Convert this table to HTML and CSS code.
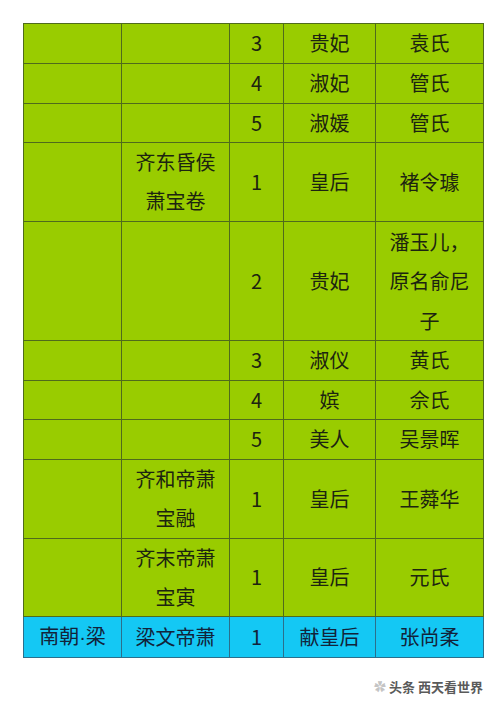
FILE: index.html
```html
<!DOCTYPE html>
<html lang="zh">
<head>
<meta charset="utf-8">
<link rel="stylesheet" href="styles.css">
</head>
<body>
<div class="page">
<table class="list">
<colgroup>
<col class="c1"><col class="c2"><col class="c3"><col class="c4"><col class="c5">
</colgroup>
<tbody>
<tr><td></td><td></td><td>3</td><td>贵妃</td><td>袁氏</td></tr>
<tr><td></td><td></td><td>4</td><td>淑妃</td><td>管氏</td></tr>
<tr><td></td><td></td><td>5</td><td>淑媛</td><td>管氏</td></tr>
<tr><td></td><td>齐东昏侯<br>萧宝卷</td><td>1</td><td>皇后</td><td>褚令璩</td></tr>
<tr class="tall"><td></td><td></td><td>2</td><td>贵妃</td><td>潘玉儿，<br>原名俞尼<br>子</td></tr>
<tr><td></td><td></td><td>3</td><td>淑仪</td><td>黄氏</td></tr>
<tr><td></td><td></td><td>4</td><td>嫔</td><td>佘氏</td></tr>
<tr><td></td><td></td><td>5</td><td>美人</td><td>吴景晖</td></tr>
<tr><td></td><td>齐和帝萧<br>宝融</td><td>1</td><td>皇后</td><td>王蕣华</td></tr>
<tr><td></td><td>齐末帝萧<br>宝寅</td><td>1</td><td>皇后</td><td>元氏</td></tr>
<tr class="blue"><td>南朝<span class="dot">·</span>梁</td><td>梁文帝萧</td><td>1</td><td>献皇后</td><td>张尚柔</td></tr>
</tbody>
</table>
<div class="mark"><span class="mark-icon">✿</span>头条 西天看世界</div>
</div>
</body>
</html>
```
FILE: styles.css
```css
html, body {
  margin: 0;
  padding: 0;
  background: #ffffff;
}
.page {
  width: 500px;
  height: 707px;
  padding-top: 23px;
  box-sizing: border-box;
  font-family: "Noto Sans CJK SC", "Noto Sans", sans-serif;
}
.list {
  margin-left: 23px;
  border-collapse: collapse;
  table-layout: fixed;
  width: 460px;
}
.c1 { width: 98px; }
.c2 { width: 108px; }
.c3 { width: 54px; }
.c4 { width: 92px; }
.c5 { width: 108px; }
.list td {
  background: #99cc00;
  border: 1px solid #4f6b1c;
  padding: 0;
  height: 38.8px;
  line-height: 38.8px;
  font-size: 20px;
  color: #1c2410;
  text-align: center;
  vertical-align: middle;
  white-space: nowrap;
}
.list tr.tall td {
  line-height: 39.3px;
}
.list tr.blue td {
  background: #14c8f4;
  border-color: #2b6f8c;
  color: #12233a;
}
.dot {
  font-family: "Liberation Sans", sans-serif;
}
.mark {
  margin-top: 19px;
  margin-right: 17px;
  text-align: right;
  font-size: 13px;
  font-weight: bold;
  color: #5a5a5a;
  text-shadow: 0 0 1px #ffffff;
}
.mark-icon {
  color: #c4c4c4;
  font-size: 12px;
  font-weight: normal;
  margin-right: 3px;
}
```
